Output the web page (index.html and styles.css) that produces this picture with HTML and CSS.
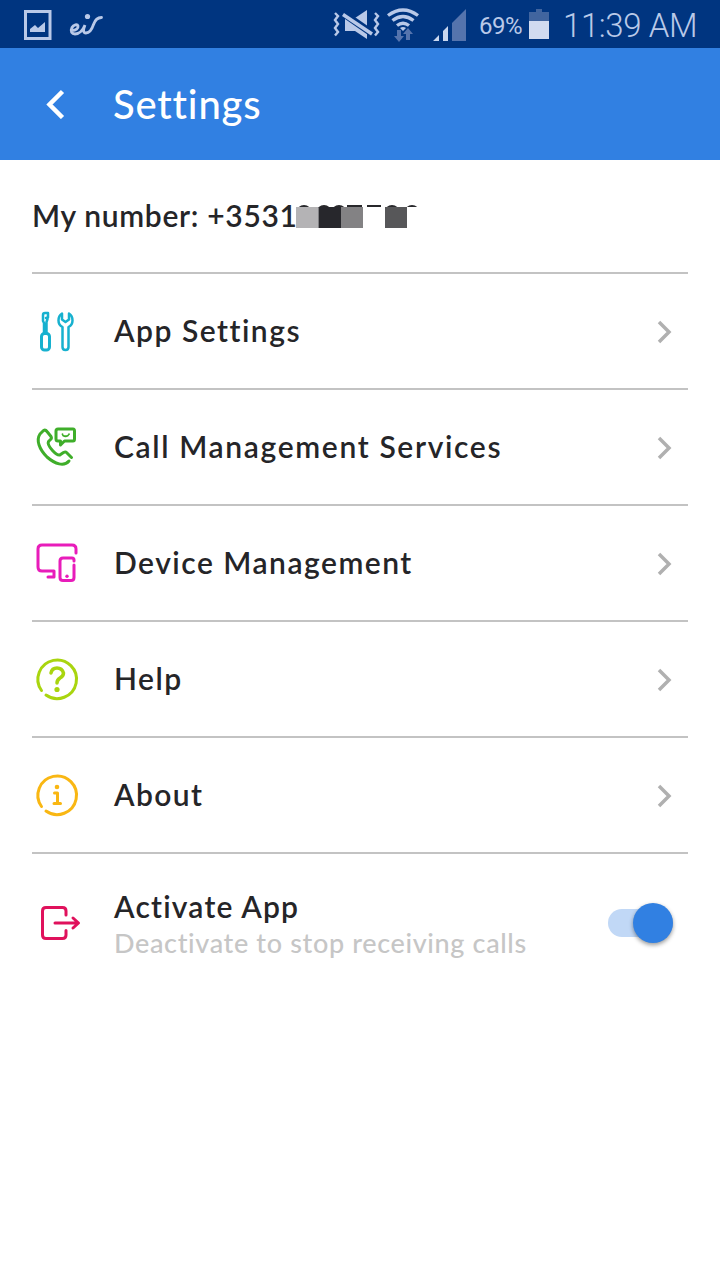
FILE: index.html
```
<!DOCTYPE html>
<html lang="en">
    <head>
        <meta charset="utf-8">
        <title>Settings</title>
        <link rel="stylesheet" href="styles.css">
    </head>
    <body>

        <div class="statusbar">
            <svg class="status-left" width="110" height="48" viewBox="0 0 110 48">
                <path d="M25.500 11.500h24.500v27H25.500z" fill="none" stroke="#b9c9e8" stroke-width="3"/>
                <path d="M30 32v-3l5-4 3 3 7-6v10z" fill="#b9c9e8"/>
                <path d="M72 30.500c4 0 6.500-2 6-4.500-.6-2-4.500-1.500-6 1.500-2 4 0 6.500 3 6.500 4 0 8-4 10-9-2 5-2 8 1 8 4 0 6-4 7.500-8.500 1.500-4.500 3.500-7 8-7" fill="none" stroke="#b9c9e8" stroke-width="2.800" stroke-linecap="round"/>
                <circle cx="87.500" cy="16.500" r="2.600" fill="#b9c9e8"/>
            </svg>
            <svg class="status-icons" width="144" height="48" viewBox="330 0 144 48">
                <path d="M335 13l3 3-3 4 3 4-3 4 3 4-3 3.500M375 13l3 3-3 4 3 4-3 4 3 4-3 3.500" fill="none" stroke="#b9c9e8" stroke-width="2.400"/>
                <path d="M345 18h10l12-8v29l-12-8h-10z" fill="#b9c9e8"/>
                <path d="M342 12.500l31 21.500" stroke="#003580" stroke-width="7"/>
                <path d="M343 14.500l29 19.500" stroke="#b9c9e8" stroke-width="3.500"/>
                <g fill="none" stroke="#b9c9e8" stroke-width="3.400">
                    <path d="M388 15.500q15-11 30 0M392.500 20.500q10.500-8 21 0M397 25.500q6-4.500 12 0"/>
                </g>
                <path d="M400 28q3-2 6 0l-3 3z" fill="#b9c9e8"/>
                <path d="M397 30h4v6h3l-5 6-5-6h3zM406 40h4v-6h3l-5-6-5 6h3z" fill="#5574ad"/>
                <path d="M433 41l6-6v6zM443 31l5-5v15h-5z" fill="#c9d7ef"/>
                <path d="M452 23l14-14v32h-14z" fill="#5574ad"/>
            </svg>
            <span class="percent">69%</span>
            <svg class="battery" width="20" height="30" viewBox="0 0 20 30">
                <path d="M0 3h7V0h6v3h7v9H0z" fill="#41659f"/>
                <path d="M0 12h20v18H0z" fill="#d1dbf0"/>
            </svg>
            <span class="clock">11:39 AM</span>
        </div>

        <div class="header">
            <svg class="back" width="20" height="30" viewBox="0 0 20 30">
                <path d="M17.500 2.500L4.500 15.500l13 13" fill="none" stroke="white" stroke-width="4.500"/>
            </svg>
            <span class="title">Settings</span>
        </div>

        <div class="content">
            <div class="number">
                <span class="number-text">My number: +3531</span>
                <!-- the rest of the number is masked -->
                <svg width="124" height="26" viewBox="296 203 124 26">
                    <path d="M299 208q5-4 10 0M319 208q5-4 10 0M334 208q5-4 10 0M347 206h15M367 206h14M387 208q5-4 10 0M407 208q5-4 10 0" fill="none" stroke="#28282b" stroke-width="2"/>
                    <path d="M296 207h22.500v21H296z" fill="#b4b3b5"/>
                    <path d="M318.500 207H341v21h-22.500z" fill="#27272c"/>
                    <path d="M341 207h22v21h-22z" fill="#838284"/>
                    <path d="M363 207h22v21h-22zM407 207h13v21h-13z" fill="white"/>
                    <path d="M385 207h22v21h-22z" fill="#575759"/>
                </svg>
            </div>

            <div class="row">
                <svg class="icon" width="50" height="50" viewBox="32 306 50 50" stroke="#17b1cf">
                    <path d="M44 333v-10l-1-2v-6q0-2 2-2h3v4.500L46 318M46.500 333v-11l1-3" stroke-width="2.500"/>
                    <rect x="41.500" y="333.500" width="8" height="16.500" rx="3"/>
                    <path d="M62.500 347v-20q-4-2-4-6.500 0-5 3.500-7v6l3.500 2.500 3.500-2.500v-6q3.500 2 3.500 7 0 4.500-4 6.500v20q0 3-3 3t-3-3z" stroke-width="2.500"/>
                </svg>
                <span class="label label-app">App Settings</span>
                <svg class="arrow" width="18" height="26" viewBox="0 0 18 26"><path d="M3 3l10 10L3 23"/></svg>
            </div>

            <div class="row">
                <svg class="icon" width="50" height="50" viewBox="32 422 50 50" stroke="#3fae2a">
                    <path d="M69 461c-5 6-14 3-22-4-8-8-11-17-7-23l3.500-3.500q2-1 3.500 1l4 5q1 2-.5 3l-2 2q-1.500 3 4 9t8 4l3-2q2-1 3 0l5 5"/>
                    <path d="M58 429h15q1.500 0 1.500 2v8q0 2-1.500 2h-8.500l-4 4v-4h-2.500q-2 0-2-2v-8q0-2 2-2z"/>
                    <path d="M62.500 434.200v.1M69 434.200v.1M63 435.500q2.500 1.500 5 0" stroke-width="1.800"/>
                </svg>
                <span class="label label-call">Call Management Services</span>
                <svg class="arrow" width="18" height="26" viewBox="0 0 18 26"><path d="M3 3l10 10L3 23"/></svg>
            </div>

            <div class="row">
                <svg class="icon" width="50" height="50" viewBox="32 538 50 50" stroke="#e81cba">
                    <path d="M76 553v-4q0-4-4-4H42q-4 0-4 4v18q0 4 4 4h12v6h-6"/>
                    <path d="M74 561v-1q0-2-2-2h-9q-3 0-3 3v16.500q0 3 3 3h8q3 0 3-3v-12.500"/>
                    <circle cx="67" cy="576.300" r="1.700" fill="#e81cba" stroke="none"/>
                </svg>
                <span class="label label-device">Device Management</span>
                <svg class="arrow" width="18" height="26" viewBox="0 0 18 26"><path d="M3 3l10 10L3 23"/></svg>
            </div>

            <div class="row">
                <svg class="icon" width="50" height="50" viewBox="32.500 654.500 50 50" stroke="#a9d50f">
                    <path d="M46.500 695.500A19.300 19.300 0 1 0 42 691"/>
                    <path d="M51.500 673.500q1-5 6-5t6.500 5q0 3-3.500 5-3 2-3 5" stroke-width="3.500"/>
                    <circle cx="57.500" cy="690" r="2.600" fill="#a9d50f" stroke="none"/>
                </svg>
                <span class="label label-help">Help</span>
                <svg class="arrow" width="18" height="26" viewBox="0 0 18 26"><path d="M3 3l10 10L3 23"/></svg>
            </div>

            <div class="row">
                <svg class="icon" width="50" height="50" viewBox="32.500 770.500 50 50" stroke="#f9b713">
                    <path d="M46.500 811.500A19.300 19.300 0 1 0 42 807"/>
                    <path d="M55 793.500h3v10M54.500 804h6.500"/>
                    <circle cx="57.500" cy="787.500" r="2.300" fill="#f9b713" stroke="none"/>
                </svg>
                <span class="label label-about">About</span>
                <svg class="arrow" width="18" height="26" viewBox="0 0 18 26"><path d="M3 3l10 10L3 23"/></svg>
            </div>

            <div class="row activate">
                <svg class="icon" width="50" height="50" viewBox="32 898 50 50" stroke="#e0115c">
                    <path d="M66 915v-4q0-3.500-3.500-3.500H46q-3.500 0-3.500 3.500v24q0 3.500 3.500 3.500h16.500q3.500 0 3.500-3.500v-4.500"/>
                    <path d="M55 923h23M73 918l5.500 5-5.500 5"/>
                </svg>
                <div class="texts">
                    <span class="label label-activate">Activate App</span>
                    <span class="hint">Deactivate to stop receiving calls</span>
                </div>
                <div class="switch"><div class="knob"></div></div>
            </div>
        </div>

    </body>
</html>
```
FILE: styles.css
```
body{
    margin:0;
    background-color:white;
    color:#252528;
    font-family:Lato, "Open Sans", sans-serif;
}

.statusbar{
    display:flex;
    align-items:center;
    height:48px;
    background-color:#003580;
    color:#b9c9e8;
    font-family:Roboto, sans-serif;
    white-space:nowrap;
}

.status-icons{
    margin-left:220px;
}

.percent{
    width:50px;
    margin-left:5px;
    padding-top:3px;
    font-size:24px;
    letter-spacing:-0.5px;
}

.clock{
    margin-left:14px;
    padding-top:3px;
    font-size:33px;
    font-weight:350;
    letter-spacing:-0.4px;
}

.header{
    display:flex;
    align-items:center;
    height:112px;
    background-color:#3180e2;
    color:white;
}

.back{
    margin-left:45px;
}

.title{
    margin-left:48px;
    font-size:40px;
    font-weight:500;
    letter-spacing:0.8px;
}

.content{
    padding:0 32px;
}

.number{
    display:flex;
    align-items:center;
    height:112px;
    font-size:30px;
    font-weight:600;
    letter-spacing:0.68px;
    white-space:nowrap;
}

.number-text{
    width:264px;
    padding-bottom:2px;
}

.row{
    display:flex;
    align-items:center;
    height:114px;
    border-top:2px solid #c3c3c3;
}

.icon{
    fill:none;
    stroke-width:3;
    stroke-linecap:round;
    stroke-linejoin:round;
}

.label{
    margin-left:32px;
    padding-bottom:2px;
    font-size:30px;
    font-weight:600;
    white-space:nowrap;
}

.label-app{
    letter-spacing:1.5px;
}

.label-call{
    letter-spacing:1.65px;
}

.label-device{
    letter-spacing:1.5px;
}

.label-help{
    letter-spacing:1.5px;
}

.label-about{
    letter-spacing:1.4px;
}

.label-activate{
    letter-spacing:1.2px;
}

.arrow{
    margin-left:auto;
    margin-right:14px;
    padding-top:1px;
    fill:none;
    stroke:#b0b0b0;
    stroke-width:3.5;
}

.activate{
    height:138px;
}

.texts{
    display:flex;
    flex-direction:column;
    margin-left:32px;
}

.texts .label{
    margin-left:0;
}

.hint{
    font-size:27px;
    font-weight:500;
    letter-spacing:0.65px;
    color:#c6c6c6;
    white-space:nowrap;
}

.switch{
    display:flex;
    align-items:center;
    justify-content:flex-end;
    width:65px;
    height:28px;
    margin-left:auto;
    margin-right:15px;
    border-radius:14px;
    background-color:#c1d8f6;
}

.knob{
    flex:none;
    width:40px;
    height:40px;
    border-radius:50%;
    background-color:#3180e2;
    box-shadow:0 2px 4px rgba(0,0,0,0.4);
}
```
